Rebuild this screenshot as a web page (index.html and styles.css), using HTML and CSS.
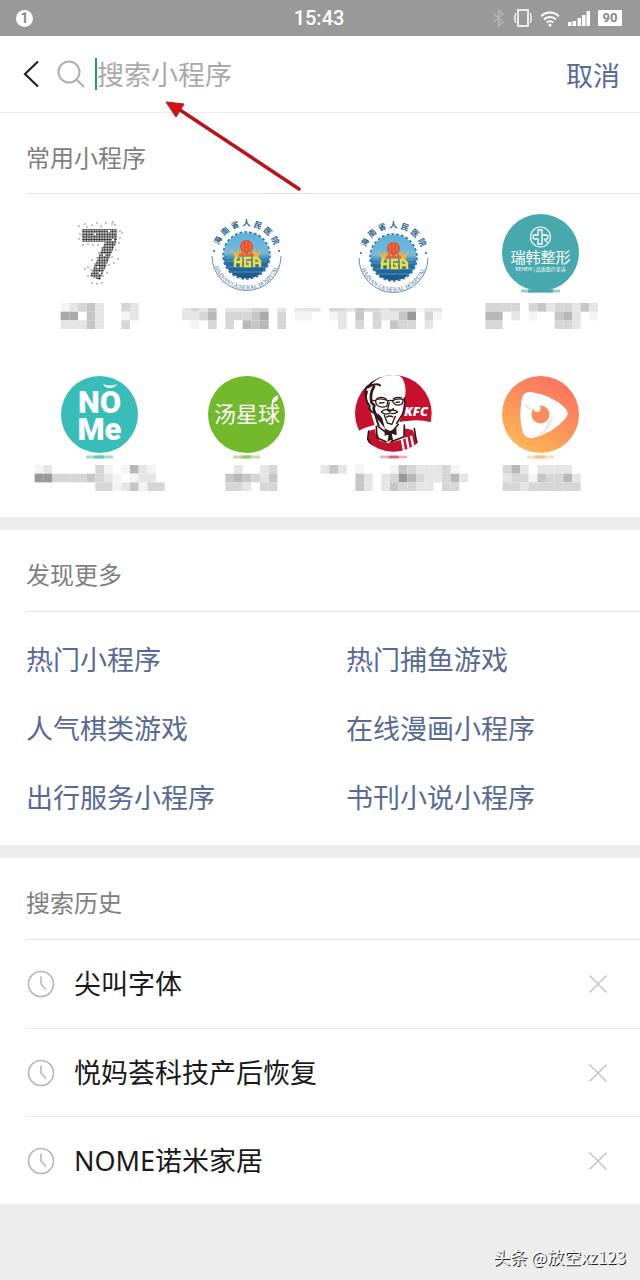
FILE: index.html
```html
<!DOCTYPE html>
<html lang="zh-CN">
<head>
<meta charset="utf-8">
<meta name="viewport" content="width=device-width, initial-scale=1">
<title>搜索小程序</title>
<link rel="stylesheet" href="styles.css">
</head>
<body>
<div class="page">
  <header class="status">
    <span class="status-left"><span class="badge">1</span></span>
    <time class="clock">15:43</time>
    <span class="status-right">
      <svg width="14" height="20" viewBox="0 0 14 20" fill="none" stroke="#b5b5b5" stroke-width="1.5"><path d="M2 6l9 8-4.500 4V2l4.500 4-9 8"/></svg>
      <svg width="20" height="20" viewBox="0 0 20 20" fill="none" stroke="#fff"><rect x="5" y="2" width="10" height="16" stroke-width="1.600"/><path d="M2.500 5v2l-1 1.500 1 1.500-1 1.500 1 1.500v2M17.500 5v2l1 1.500-1 1.500 1 1.500-1 1.500v2" stroke-width="1.200"/></svg>
      <svg width="20" height="20" viewBox="0 0 20 20" fill="none" stroke="#fff" stroke-width="2"><path d="M1.200 8.200a12.500 12.500 0 0 1 17.600 0M4 11.500a8.500 8.500 0 0 1 12 0M6.800 14.500a4.600 4.600 0 0 1 6.400 0"/><circle cx="10" cy="17" r="1.500" fill="#fff" stroke="none"/></svg>
      <svg width="24" height="20" viewBox="0 0 24 20" fill="#fff"><path d="M1 14h3.500v4H1zM5.500 13H9v5H5.500zM10.500 10H14v8h-3.500zM15 7h3.500v11H15zM19.500 3H23v15h-3.500z"/></svg>
      <span class="battery">90</span>
    </span>
  </header>

  <form class="search" onsubmit="return false">
    <button class="back" type="button" aria-label="返回"><svg width="18" height="30" viewBox="0 0 18 30" fill="none" stroke="#222" stroke-width="2.200"><path d="M16 2.500L3 15l13 12.500"/></svg></button>
    <svg class="lens" width="28" height="28" viewBox="0 0 28 28" fill="none" stroke="#b0b0b0" stroke-width="2"><circle cx="12" cy="12" r="10.500"/><path d="M19.500 19.500L27 27"/></svg>
    <span class="caret"></span>
    <input class="field" type="text" placeholder="搜索小程序" aria-label="搜索小程序">
    <button class="cancel" type="button">取消</button>
  </form>

  <main>
    <section>
      <h2 class="title">常用小程序</h2>
      <div class="apps">
        <div class="app">
          <svg class="icon" viewBox="0 0 91 91">
            <defs><pattern id="dots" width="2.600" height="2.600" patternUnits="userSpaceOnUse"><circle cx="1.300" cy="1.300" r="1.120" fill="#222"/></pattern></defs>
            <path d="M28 22h35v11L46 73l-10-4 15-34H28z" fill="url(#dots)"/>
            <path d="M25 19h0M31 17h0M38 18h0M47 19h0M52 16h0M58 17h0M61 18h0M66 24h0M68 26h0M66 31h0M25 32h0M29 38h0M34 37h0M39 38h0M44 38h0M48 41h0M45 46h0M43 51h0M38 53h0M41 57h0M34 60h0M37 63h0M31 62h0M34 69h0M38 76h0M43 77h0M48 76h0M49 69h0M53 66h0M51 60h0M55 58h0M53 53h0M58 50h0M57 45h0M62 43h0M61 38h0M65 36h0M60 56h0M64 52h0M26 27h0M59 15h0M33 20h0M43 16h0" stroke="#555" stroke-width="1.300" stroke-linecap="round"/>
            <path d="M40 27h2M54 24h2M49 48h2M43 60h2M58 33h2M45 66h2" stroke="#fff" stroke-width="2.200"/>
          </svg>
          <svg class="mosaic" viewBox="26 0 147 26" data-col="7" data-rows="fedce..de|aa.ce..fe|eeece..d."></svg>
        </div>
        <div class="app">
          <svg class="icon" viewBox="0 0 91 91">
            <defs>
              <linearGradient id="sea" x1="0" y1="0" x2="0" y2="1"><stop offset="0" stop-color="#5bb2dc"/><stop offset=".45" stop-color="#75b9dc"/><stop offset=".6" stop-color="#2776ae"/><stop offset="1" stop-color="#1a5588"/></linearGradient>
              <path id="arc-top" d="M16 48.500a29.500 29.500 0 0 1 59 0"/>
              <path id="arc-low" d="M12 45a33.700 33.700 0 1 0 67 0"/>
              <g id="hospital">
                <circle cx="45.500" cy="48.500" r="23" fill="url(#sea)"/>
                <circle cx="45.500" cy="48.500" r="23.500" fill="none" stroke="#2a70a4" stroke-width="1.500" stroke-dasharray="2.900 2"/>
                <path d="M26 51h39M25 54h41M27 60h37M30 65h31" stroke="#69a7cd" stroke-width=".700"/>
                <path d="M34 51l-4-9 5 4 2-4 3 7M57 51l4-9-5 4-2-4-3 7" fill="#e4b83b"/>
                <path d="M38 45h15v4H38z" fill="#e4633e"/>
                <circle cx="45.500" cy="39.500" r="6.500" fill="#e84e2f"/>
                <path d="M45.500 34v10M42 36v7M49 36v7" stroke="#f18a46" stroke-width=".900"/>
                <path d="M39 47v-2M43 47v-2M48 47v-2M52 47v-2" stroke="#f7d768"/>
                <path d="M34 60v-7l2-3M40 60V50M34 55h6M50 51h-6v8h5v-4h-3M53 60V51h3l3 3v6M53 56h6" fill="none" stroke="#f6dc37" stroke-width="2.500"/>
                <text class="ring-cn" fill="#265f91"><textPath href="#arc-top" startOffset="50%" text-anchor="middle">海&#8196;南&#8196;省&#8196;人&#8196;民&#8196;医&#8196;院</textPath></text>
                <text class="ring-en" fill="#48749b"><textPath href="#arc-low" startOffset="50%" text-anchor="middle">HAINAN GENERAL HOSPITAL</textPath></text>
                <path d="M11 49a34.500 34.500 0 0 0 69 0" fill="none" stroke="#5685a9" stroke-width=".900"/>
                <circle cx="13" cy="44" r="1" fill="#265f91"/><circle cx="78" cy="44" r="1" fill="#265f91"/>
              </g>
            </defs>
            <use href="#hospital"/>
          </svg>
          <svg class="mosaic" viewBox="173 0 147 26" data-col="21" data-top="5" data-rows="edec.eeedd.e.eee|eedb.dddca.d.ff.|.f.d.d.bcb.d"></svg>
        </div>
        <div class="app">
          <svg class="icon" viewBox="0 0 91 91"><use href="#hospital" y="2"/></svg>
          <svg class="mosaic" viewBox="320 0 147 26" data-col="38" data-top="5" data-rows="ddecddedddfee|fe.c.deec9.df|.e.d.d.cdd.e"></svg>
        </div>
        <div class="app">
          <svg class="icon" viewBox="0 0 91 91">
            <path d="M26 84h39" stroke="#9ccdd0" stroke-width="3"/><path d="M33 84h25" stroke="#45a8ad" stroke-width="3"/>
            <circle cx="45.500" cy="45.500" r="38.500" fill="#47a9ae"/>
            <g fill="none" stroke="#fff"><circle cx="45.500" cy="30" r="10" stroke-width="1.200"/><path d="M50 28h-3v-5h-4v5h-4q-2 2 0 4h4v5h4v-9h3q4 0 3 3-1 2-4 1l4 4" stroke-width="1.300"/></g>
            <text x="45.500" y="56" text-anchor="middle" class="ruihan" fill="#fff">瑞韩整形</text>
            <text x="45.500" y="64" text-anchor="middle" class="ruihan-sub" fill="#fff">REHEM | 品质医疗美容</text>
          </svg>
          <svg class="mosaic" viewBox="467 0 147 26" data-col="56" data-rows="dddd.dceddece|bb.e.f..cbe.f|dd......dde.."></svg>
        </div>

        <div class="app">
          <svg class="icon" viewBox="0 0 91 91">
            <circle cx="45.500" cy="45.500" r="38.500" fill="#39bdb9"/>
            <text class="nome" x="45.500" y="44" text-anchor="middle" fill="#fff">NO</text>
            <text class="nome" x="45.500" y="71" text-anchor="middle" fill="#fff">Me</text>
            <path d="M49 15q7 3 14 0-2 4-7 4t-7-4z" fill="#fff"/>
            <path d="M32 88h27" stroke="#9bded9" stroke-width="3"/><path d="M40 88h10" stroke="#65cbc7" stroke-width="3"/>
          </svg>
          <svg class="mosaic" viewBox="26 0 147 26" data-col="4" data-rows="fe.....df.fbef.|99ddddcdef.fee.|.......ddfecfdd"></svg>
        </div>
        <div class="app">
          <svg class="icon" viewBox="0 0 91 91">
            <circle cx="45.500" cy="45.500" r="38.500" fill="#72b92b"/>
            <text x="46" y="53" text-anchor="middle" class="soup" fill="#fff">汤星球</text>
            <path d="M71 34q-1-5 6-8 1 6-4 7l-3 5" fill="#fff"/>
            <path d="M32 88h27" stroke="#c0dda3" stroke-width="3"/><path d="M40 88h10" stroke="#98cb67" stroke-width="3"/>
          </svg>
          <svg class="mosaic" viewBox="173 0 147 26" data-col="26" data-rows=".e..ed|cbcdec|dde.dd"></svg>
        </div>
        <div class="app">
          <svg class="icon" viewBox="-6 -3 273 273">
            <defs><clipPath id="kfc-disc"><circle cx="130" cy="130" r="115"/></clipPath></defs>
            <g clip-path="url(#kfc-disc)">
              <path d="M0 0h260v162q-45-16-88-9l-90 12q-42 4-62 24H0z" fill="#c7102e"/>
              <path d="M20 190q30-20 60-26l90-10q45-4 75 7v100H20z" fill="#fff"/>
              <path d="M56 183l27-8 4 36 28 9 50-14-3-31 26 5 26 60-30 30H70l-18-36z" fill="#c7102e"/>
              <path d="M155 205l8 42M169 202l8 40M183 197l8 39" stroke="#fff" stroke-width="7"/>
              <path d="M58 115q-20-45-5-68Q70 18 108 10q43-5 54 25 9 25 1 53l-3 38-15 37-3 32-37 11-28-15-3-26z" fill="#fff"/>
              <g fill="none" stroke="#30191a" stroke-linecap="round" stroke-linejoin="round">
                <path d="M54 52Q68 30 92 20M54 52q24-15 36-6M47 79q-5-23 8-31M51 65q-9 24 8 43M59 107q-4 17 15 22l12 39" stroke-width="6"/>
                <path d="M72 50q-13 20-8 47l9 9q-5 11 2 23l14 20" stroke-width="8"/>
                <path d="M163 84q4 25-6 49l-17 27" stroke-width="5"/>
                <path d="M76 91q14-9 38 1l-3 16q-20 9-32-5zM127 92q18-9 33-3l-4 13q-19 8-25-3zM65 91l12 1M113 93q7-4 15 0" stroke-width="4"/>
                <path d="M81 86q15-8 28 1M130 86q15-7 25-2M88 99l14-1M138 97l10-1M118 98l-5 19q8 8 17-1M94 125q15-12 24 0 14-10 25 1-10 8-23 3-14 8-25-2M103 136l9 23 14 4 10-24M110 141q9-6 19 0" stroke-width="4"/>
                <path d="M79 169l2 34 27 12M56 183l-3 24 13 23M163 165l-1 35-40 16M193 176l6 39M85 170l30 23M145 163l-22 27" stroke-width="5"/>
              </g>
              <path d="M83 128l14 17 8 31-17-22zM104 175l16 8 19-9 1 22-19-6-17 8zM117 188h8l5 27-9-5-9 7z" fill="#30191a"/>
            </g>
            <text class="kfc" x="163" y="137" fill="#fff">KFC</text>
            <path d="M91 261h80" stroke="#edabb9" stroke-width="8"/><path d="M116 261h30" stroke="#d8667e" stroke-width="8"/>
          </svg>
          <svg class="mosaic" viewBox="320 0 147 26" data-col="37" data-rows="ece.f...fcdeeedf.|....ce.ed9bdeedbe|....ce.ecddee.dd."></svg>
        </div>
        <div class="app">
          <svg class="icon" viewBox="0 0 91 91">
            <defs><linearGradient id="sunset" x1=".2" y1="1" x2=".75" y2="0"><stop offset="0" stop-color="#ffbb58"/><stop offset=".5" stop-color="#fb9359"/><stop offset="1" stop-color="#fb7161"/></linearGradient></defs>
            <circle cx="45.500" cy="45.500" r="38.500" fill="url(#sunset)"/>
            <path d="M27 29q2-7 9-6 20 3 33 15 7 6 1 12-12 14-32 19-7 1-10-5-5-16-1-35z" fill="#fff"/>
            <path d="M31 34q5 8 11 7-8 2-12-3M58 46q0 11-10 19l-5 1q8-5 9-12" fill="#f9e7e2"/>
            <circle cx="45.500" cy="45.500" r="9" fill="#fb8c5c"/><circle cx="42" cy="39.500" r="3.500" fill="#fff"/>
            <path d="M32 88h27" stroke="#fbdcb8" stroke-width="3"/><path d="M40 88h10" stroke="#fac181" stroke-width="3"/>
          </svg>
          <svg class="mosaic" viewBox="467 0 147 26" data-col="58" data-rows="dbe.eeee.|eddfcddbe|ddedddddd"></svg>
        </div>
      </div>
    </section>

    <section class="block">
      <h2 class="title">发现更多</h2>
      <nav class="links">
        <a href="#">热门小程序</a><a href="#">热门捕鱼游戏</a>
        <a href="#">人气棋类游戏</a><a href="#">在线漫画小程序</a>
        <a href="#">出行服务小程序</a><a href="#">书刊小说小程序</a>
      </nav>
    </section>

    <section class="block">
      <h2 class="title">搜索历史</h2>
      <ul class="history">
        <li><svg class="clock-icon" viewBox="0 0 28 28"><circle cx="14" cy="14" r="12.500"/><path d="M14 6.500V14l5 5.500"/></svg><span class="term">尖叫字体</span><button class="remove" type="button" aria-label="删除 尖叫字体"><svg viewBox="0 0 20 20"><path d="M1.500 1.500l17 17M18.500 1.500l-17 17"/></svg></button></li>
        <li><svg class="clock-icon" viewBox="0 0 28 28"><circle cx="14" cy="14" r="12.500"/><path d="M14 6.500V14l5 5.500"/></svg><span class="term">悦妈荟科技产后恢复</span><button class="remove" type="button" aria-label="删除 悦妈荟科技产后恢复"><svg viewBox="0 0 20 20"><path d="M1.500 1.500l17 17M18.500 1.500l-17 17"/></svg></button></li>
        <li><svg class="clock-icon" viewBox="0 0 28 28"><circle cx="14" cy="14" r="12.500"/><path d="M14 6.500V14l5 5.500"/></svg><span class="term">NOME诺米家居</span><button class="remove" type="button" aria-label="删除 NOME诺米家居"><svg viewBox="0 0 20 20"><path d="M1.500 1.500l17 17M18.500 1.500l-17 17"/></svg></button></li>
      </ul>
    </section>
  </main>

  <footer class="footer">头条 @放空xz123</footer>

  <svg class="pointer" width="140" height="96" viewBox="0 0 140 96"><path d="M10 8L135 91" stroke="#b8141a" stroke-width="3.500" stroke-linecap="round"/><path d="M2 4l18 2-8 13z" fill="#d80f12" stroke="#b8141a"/></svg>
</div>
<script src="mosaic.js"></script>
</body>
</html>
```

FILE: styles.css
```css
* { box-sizing: border-box; }

body {
  margin: 0;
  background: #ededed;
  color: #1a1a1a;
  font-family: "Noto Sans CJK SC", "Noto Sans", sans-serif;
}

button, input {
  font: inherit;
  border: 0;
  padding: 0;
  background: none;
}

.page {
  position: relative;
  display: flex;
  flex-direction: column;
  min-height: 100vh;
}

.status {
  display: grid;
  grid-template-columns: 1fr auto 1fr;
  align-items: center;
  height: 36px;
  padding: 0 18px 0 16px;
  background: #999;
  color: #fff;
}

.badge {
  display: block;
  width: 17px;
  height: 17px;
  border-radius: 50%;
  background: #fff;
  color: #888;
  font: bold 14px/17px Roboto, sans-serif;
  text-align: center;
}

.clock { font: 500 20px/24px Roboto, sans-serif; }

.status-right {
  display: flex;
  justify-content: flex-end;
  align-items: center;
  gap: 7px;
}

.battery {
  width: 24px;
  height: 16px;
  border-radius: 1px;
  background: #fff;
  color: #888;
  font: bold 13px/16px Roboto, sans-serif;
  text-align: center;
}

.search {
  display: flex;
  align-items: center;
  height: 77px;
  padding: 0 20px 0 22px;
  background: #fff;
  border-bottom: 1px solid #ececec;
  font-size: 27px;
}

.back, .back svg { display: block; }
.lens { margin: 0 10px 0 17px; }

.caret {
  width: 2px;
  height: 32px;
  background: #1aa566;
}

.field {
  flex: 1;
  min-width: 0;
  height: 40px;
  padding-bottom: 2px;
  outline: 0;
}

.field::placeholder { color: #aaa; opacity: 1; }
.cancel { color: #576b95; }

section { background: #fff; }
.block { margin-top: 13px; }

.title {
  margin: 0 0 0 26px;
  height: 81px;
  padding-top: 8px;
  border-bottom: 1px solid #e5e5e5;
  color: #808080;
  font-size: 24px;
  font-weight: 400;
  line-height: 72px;
}

.block .title { height: 82px; }

.apps {
  display: grid;
  grid-template-columns: repeat(4, 1fr);
  row-gap: 40px;
  padding: 13px 26px 26px;
}

.app {
  display: flex;
  flex-direction: column;
  align-items: center;
  gap: 5px;
}

.icon { width: 91px; height: 91px; }
.mosaic { width: 147px; height: 26px; overflow: visible; }

.ring-cn { font: bold 8px "Noto Sans CJK SC", sans-serif; }
.ring-en { font: 6px "Liberation Serif", serif; }
.ruihan { font: 15px "Noto Sans CJK SC", sans-serif; }
.ruihan-sub { font: 5px "Noto Sans CJK SC", sans-serif; }
.nome { font: 900 31px Roboto, sans-serif; }
.soup { font: 22px "Noto Sans CJK SC", sans-serif; }
.kfc { font: italic 800 38px "Open Sans", sans-serif; }

.links {
  display: grid;
  grid-template-columns: 1fr 1fr;
  padding: 12px 0 14px 26px;
  column-gap: 26px;
}

.links a {
  color: #576b95;
  font-size: 27px;
  line-height: 69px;
  text-decoration: none;
}

.history {
  margin: 0 0 0 26px;
  padding: 0;
  list-style: none;
}

.history li {
  display: flex;
  align-items: center;
  height: 88px;
  padding-right: 32px;
  padding-left: 1px;
}

.history li + li { border-top: 1px solid #ebebeb; }

.clock-icon {
  width: 28px;
  height: 28px;
  margin-right: 19px;
  fill: none;
  stroke: #b8b8b8;
  stroke-width: 1.6;
}

.term {
  flex: 1;
  font-family: "Noto Sans", "Noto Sans CJK SC", sans-serif;
  font-size: 27px;
  line-height: 40px;
}

.remove, .remove svg { display: block; width: 20px; height: 20px; }
.remove svg { fill: none; stroke: #c4c4c4; stroke-width: 1.5; }

.footer {
  flex: 1;
  display: flex;
  justify-content: flex-end;
  align-items: flex-end;
  padding: 0 14px 9px;
  background: #ededed;
  color: #f6f6f6;
  font-size: 17px;
  line-height: 28px;
  text-shadow: 1px 1px 0 #222;
}

.pointer {
  position: absolute;
  top: 98px;
  left: 164px;
  pointer-events: none;
}
```

FILE: mosaic.js
```js
// Draws pixelated labels: each row string holds one grey level per cell.
const CELL = 26 / 3;
const SHADES = { "9": "#999", a: "#aaa", b: "#b8b8b8", c: "#c6c6c6", d: "#d6d6d6", e: "#e5e5e5", f: "#f4f4f4" };

document.querySelectorAll(".mosaic").forEach((svg) => {
  const firstCol = Number(svg.dataset.col);
  const clipTop = Number(svg.dataset.top || 0);
  svg.dataset.rows.split("|").forEach((row, r) => {
    [...row].forEach((level, c) => {
      if (!SHADES[level]) return;
      const top = r === 0 ? clipTop : r * CELL;
      const cell = document.createElementNS("http://www.w3.org/2000/svg", "rect");
      cell.setAttribute("x", (firstCol + c) * CELL);
      cell.setAttribute("y", top);
      cell.setAttribute("width", CELL);
      cell.setAttribute("height", (r + 1) * CELL - top);
      cell.setAttribute("fill", SHADES[level]);
      svg.append(cell);
    });
  });
});
```
